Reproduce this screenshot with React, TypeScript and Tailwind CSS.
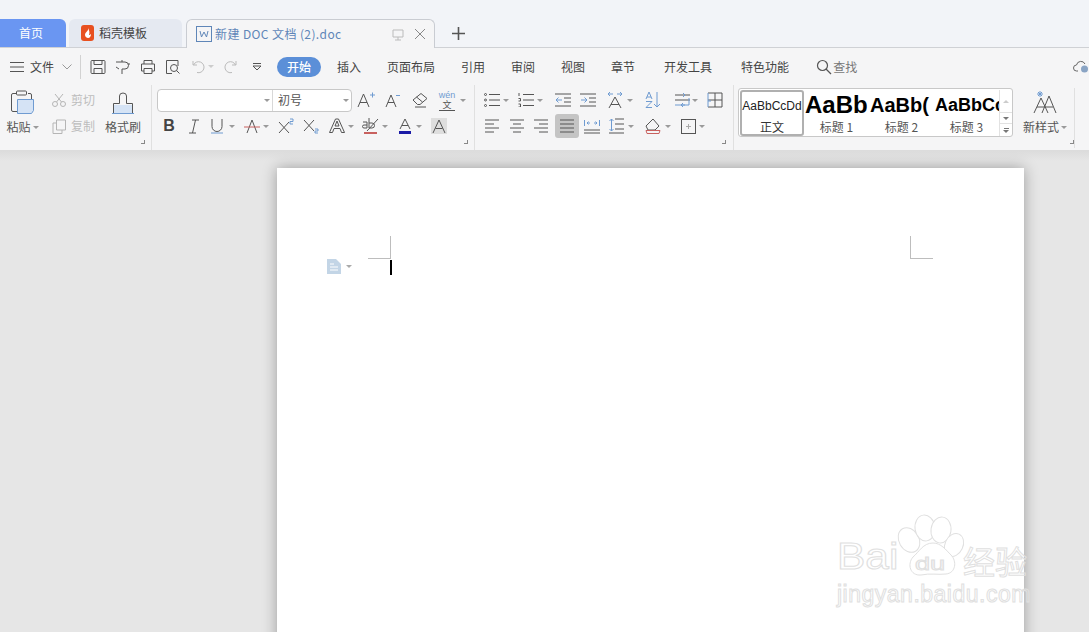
import * as React from "react";

const INK = "#555";
const BLUE = "#6f9bd1";

function Ic({ w = 20, h = 20, children }: { w?: number; h?: number; children: React.ReactNode }) {
  return (
    <svg width={w} height={h} viewBox={`0 0 ${w} ${h}`} fill="none" stroke={INK} strokeWidth="1" className="block shrink-0">
      {children}
    </svg>
  );
}

function Arrow({ className = "" }: { className?: string }) {
  return (
    <div className={"flex h-6 w-2 shrink-0 items-center justify-center " + className}>
      <div className="h-0 w-0 border-x-[3px] border-t-[3px] border-x-transparent border-t-[#9a9a9a]" />
    </div>
  );
}

function Tool({ className = "w-5", children }: { className?: string; children: React.ReactNode }) {
  return <div className={"flex h-6 shrink-0 items-center justify-center " + className}>{children}</div>;
}

function Launcher({ className }: { className: string }) {
  return <div className={"absolute h-1 w-1 border-b border-r border-[#888] " + className} />;
}

function TabBar() {
  return (
    <div className="flex h-[48px] items-end border-b border-[#cfd1d5] bg-[#f2f4f8]">
      <div className="flex h-[28px] w-[66px] items-center justify-center rounded-tr-md bg-[#6a96f2] pr-[4px] text-[12px] text-white">首页</div>
      <div className="ml-[3px] flex h-[28px] w-[113px] items-center rounded-t-md bg-[#e5e9f1] pl-[12px] text-[12px] text-[#444]">
        <svg width="13" height="16" viewBox="0 0 13 16" className="mr-[5px]">
          <rect width="13" height="16" rx="3" fill="#e8501f" />
          <path d="M7 3c1 3-3 4-3 7 0 2 2 3 3 3 2 0 3-2 3-4-1 1-2 1-2 1 1-3 0-5-1-7z" fill="#fff" />
        </svg>
        稻壳模板
      </div>
      <div className="relative top-px ml-[4px] flex h-[29px] w-[249px] items-center rounded-t-md border border-b-0 border-[#c9ccd2] bg-[#f5f5f6] pl-[9px] text-[12px] text-[#5f86b8]">
        <svg width="16" height="16" viewBox="0 0 16 16" fill="none" stroke="#5f86b8" className="mr-[3px]">
          <rect x=".5" y=".5" width="15" height="15" />
          <path d="M4 5l1.500 6L8 6l2.500 5L12 5" />
        </svg>
        <span className="tracking-[0.4px]">新建 DOC 文档 (2).doc</span>
        <svg width="14" height="14" viewBox="0 0 14 14" fill="none" stroke="#bbb" className="absolute left-[204px] top-[8px]">
          <path d="M2 2h10v7H2zM7 9v3M4 12h6" />
        </svg>
        <svg width="12" height="12" viewBox="0 0 12 12" fill="none" stroke="#888" className="absolute left-[227px] top-[8px]">
          <path d="M1 1l10 10M11 1 1 11" />
        </svg>
      </div>
      <div className="mb-[6px] ml-[15px] flex h-4 w-4 items-center justify-center">
        <svg width="13" height="13" viewBox="0 0 13 13" stroke="#555" strokeWidth="1.6">
          <path d="M0 6.500h13M6.500 0v13" />
        </svg>
      </div>
    </div>
  );
}

function MenuRow() {
  const tabs: [string, string][] = [
    ["插入", "ml-[16px]"],
    ["页面布局", "ml-[26px]"],
    ["引用", "ml-[26px]"],
    ["审阅", "ml-[26px]"],
    ["视图", "ml-[26px]"],
    ["章节", "ml-[26px]"],
    ["开发工具", "ml-[29px]"],
    ["特色功能", "ml-[29px]"],
  ];
  return (
    <div className="flex h-[37px] items-center bg-[#f5f5f6] text-[12px] text-[#444]">
      <div className="ml-[10px]">
        <Ic w={14} h={12}><path d="M0 1.500h14M0 6h14M0 10.500h14" /></Ic>
      </div>
      <span className="ml-[6px] w-[24px]">文件</span>
      <svg width="10" height="6" viewBox="0 0 10 6" fill="none" stroke="#999" className="ml-[8px]"><path d="M.5.5 5 5 9.500.5" /></svg>
      <div className="ml-[8px] h-[24px] w-px bg-[#d2d2d2]" />
      <div className="ml-[9px]">
        <Ic w={16} h={16}><path d="M2 1.500h12a1 1 0 0 1 1 1v11a1 1 0 0 1-1 1H2a1 1 0 0 1-1-1v-11a1 1 0 0 1 1-1zM4 1.500v4h8v-4M4 14.500v-5h8v5" /></Ic>
      </div>
      <div className="ml-[9px]">
        <Ic w={16} h={16}><path d="M1 3h9a3 3 0 0 1 0 7H7v5M7 1v2M13 5h2M1 8l3 2" /></Ic>
      </div>
      <div className="ml-[9px]">
        <Ic w={16} h={16}><path d="M4 5V1.500h8V5M4 12H1.500V5h13v7H12M4 9.500h8v5H4z" /></Ic>
      </div>
      <div className="ml-[9px]">
        <Ic w={16} h={16}><path d="M13 7V1.500H1.500v13H7" /><circle cx="9" cy="9" r="3.500" /><path d="m11.500 11.500 3 3" /></Ic>
      </div>
      <div className="ml-[11px]">
        <svg width="14" height="14" viewBox="0 0 14 14" fill="none" stroke="#bbb"><path d="M1 1v4h4M1.500 5A5.500 5.500 0 1 1 5 12.500" /></svg>
      </div>
      <div className="ml-[2px] h-0 w-0 border-x-[3px] border-t-[3px] border-x-transparent border-t-[#ccc]" />
      <div className="ml-[9px]">
        <svg width="14" height="14" viewBox="0 0 14 14" fill="none" stroke="#bbb"><path d="M13 1v4H9M12.500 5A5.500 5.500 0 1 0 9 12.500" /></svg>
      </div>
      <div className="ml-[15px]">
        <svg width="10" height="10" viewBox="0 0 10 10" fill="none" stroke="#555"><path d="M1 1.500h8M1 4l4 4 4-4z" /></svg>
      </div>
      <div className="ml-[15px] flex h-[20px] w-[44px] items-center justify-center rounded-full bg-[#5b8fd8] font-medium text-white">开始</div>
      {tabs.map(([t, c]) => (
        <span key={t} className={"shrink-0 " + c}>{t}</span>
      ))}
      <div className="ml-[27px]">
        <svg width="16" height="16" viewBox="0 0 16 16" fill="none" stroke="#555" strokeWidth="1.200"><circle cx="6.500" cy="6.500" r="5" /><path d="m10 10 5 5" /></svg>
      </div>
      <span className="ml-px text-[#777]">查找</span>
      <div className="ml-auto">
        <svg width="16" height="14" viewBox="0 0 16 14" fill="none" stroke="#666"><path d="M5 11H3.500a3 3 0 0 1 0-6 4.500 4.500 0 0 1 8.500-1" /><circle cx="11.500" cy="9" r="3.500" fill="#8aa4c4" stroke="none" /></svg>
      </div>
    </div>
  );
}

function ClipboardGroup() {
  return (
    <div className="relative flex w-[152px] shrink-0 border-r border-[#e0e0e0] text-[12px] text-[#555]">
      <div className="flex w-[46px] shrink-0 flex-col items-center pt-[5px]">
        <svg width="24" height="24" viewBox="0 0 24 24" fill="none" stroke={INK}>
          <path d="M5 3.500H2a1.500 1.500 0 0 0-1.500 1.500v15A1.500 1.500 0 0 0 2 21.500h4M17 3.500h2A1.500 1.500 0 0 1 20.500 5v4" />
          <rect x="5.500" y="1" width="10" height="4" rx="1" />
          <path d="M6.500 9.500h16v11l-2 3h-14z" fill="#d5e3f5" stroke={BLUE} />
        </svg>
        <div className="mt-[4px] flex items-center pr-[1px]">
          粘贴
          <div className="ml-[2px] h-0 w-0 border-x-[3px] border-t-[3px] border-x-transparent border-t-[#9a9a9a]" />
        </div>
      </div>
      <div className="flex w-[54px] shrink-0 flex-col pl-[6px] pt-[3px] text-[#bdbdbd]">
        <div className="flex h-6 items-center">
          <svg width="14" height="14" viewBox="0 0 14 14" fill="none" stroke="#b5b5b5"><circle cx="3" cy="11" r="2.500" /><circle cx="11" cy="11" r="2.500" /><path d="M4.500 9 11 1M9.500 9 3 1" /></svg>
          <span className="ml-[5px]">剪切</span>
        </div>
        <div className="mt-[2px] flex h-6 items-center">
          <svg width="14" height="15" viewBox="0 0 14 15" fill="none" stroke="#b5b5b5"><path d="M4.500 1h9v10h-9zM4 4H1v10.500h9V11" /></svg>
          <span className="ml-[5px]">复制</span>
        </div>
      </div>
      <div className="flex w-[46px] shrink-0 flex-col items-center pt-[6px]">
        <svg width="22" height="23" viewBox="0 0 22 23" fill="none" stroke={INK}>
          <path d="M1.500 14h19v8h-19z" fill="#d5e3f5" stroke="none" />
          <path d="M1.500 22V12.500h6V5a3.500 3 0 0 1 7 0v7.500h6V22" />
          <path d="M0 22.500h22" stroke={BLUE} />
        </svg>
        <div className="mt-[4px]">格式刷</div>
      </div>
      <Launcher className="left-[141px] top-[55px]" />
    </div>
  );
}

function FontGroup() {
  return (
    <div className="relative flex w-[323px] shrink-0 flex-col gap-[2px] border-r border-[#e0e0e0] pl-[5px] pt-[3px] text-[12px] text-[#555]">
      <div className="flex h-6 items-center">
        <div className="flex h-[23px] w-[195px] shrink-0 rounded-[4px] border border-[#c8c8c8] bg-white">
          <div className="flex w-[115px] items-center justify-end border-r border-[#d8d8d8] pr-[2px]">
            <div className="h-0 w-0 border-x-[3px] border-t-[3px] border-x-transparent border-t-[#9a9a9a]" />
          </div>
          <div className="flex flex-1 items-center justify-between pl-[5px] pr-[2px]">
            初号
            <div className="h-0 w-0 border-x-[3px] border-t-[3px] border-x-transparent border-t-[#9a9a9a]" />
          </div>
        </div>
        <Tool className="ml-[4px] w-5">
          <Ic w={18} h={18}>
            <path d="M1 16 6.500 3 12 16M3 11.500h7" />
            <path d="M13 4h5M15.500 1.500v5" stroke={BLUE} />
          </Ic>
        </Tool>
        <Tool className="ml-[7px] w-5">
          <Ic w={16} h={16}>
            <path d="M1 15 6 3l5 12M3 10.500h6" />
            <path d="M11 3.500h4" stroke={BLUE} />
          </Ic>
        </Tool>
        <Tool className="ml-[7px] w-5">
          <Ic w={17} h={16}><path d="M1 8 9 1.500l6 5-7 6H5.500zM4.500 5l6 5M3 15h11" /></Ic>
        </Tool>
        <Tool className="ml-[7px] w-5">
          <div className="flex flex-col items-center border-b border-[#555] text-[#555]">
            <span className="font-['Liberation_Sans',sans-serif] text-[9px] leading-[10px] text-[#6f9bd1]">wén</span>
            <span className="text-[9px] leading-[10px]">文</span>
          </div>
        </Tool>
        <Arrow className="ml-[2px]" />
      </div>
      <div className="flex h-6 items-center">
        <Tool className="w-6">
          <span className="font-['Liberation_Sans',sans-serif] text-[16px] font-bold text-[#444]">B</span>
        </Tool>
        <Tool className="ml-[1px] w-6">
          <Ic w={12} h={15}><path d="M4 1h7M1 14h7M7.500 1l-3 13" /></Ic>
        </Tool>
        <Tool className="w-[22px]">
          <Ic w={14} h={16}>
            <path d="M2 1v7.500a5 5 0 0 0 10 0V1" />
            <path d="M1 15h12" stroke={BLUE} />
          </Ic>
        </Tool>
        <Arrow />
        <Tool className="ml-[6px] w-5">
          <Ic w={16} h={16}>
            <path d="M3 15 8 2l5 13" />
            <path d="M0 9h16" stroke="#c8615f" />
          </Ic>
        </Tool>
        <Arrow />
        <Tool className="ml-[4px] w-6">
          <Ic w={16} h={16}>
            <path d="M1 4l10 11M11 4 1 15" />
            <path d="M12 1h3v2.500h-3V6h3" stroke={BLUE} />
          </Ic>
        </Tool>
        <Tool className="ml-[1px] w-6">
          <Ic w={17} h={16}>
            <path d="M1 2l10 11M11 2 1 13" />
            <path d="M12 11h3v2h-3v2h3" stroke={BLUE} />
          </Ic>
        </Tool>
        <Tool className="ml-[4px] w-5">
          <Ic><path d="M2.500 16.500 8.500 3h3l6 13.500h-3l-1.500-4H7l-1.500 4zM8 10h4l-2-5z" /></Ic>
        </Tool>
        <Arrow />
        <Tool className="ml-[6px] w-5">
          <svg width="18" height="18" viewBox="0 0 18 18" fill="none" stroke={INK}>
            <path d="M1 5h4v6H2a1.500 1.500 0 0 1 0-3h3M7 1v10h3a2.500 2.500 0 0 0 0-5H7M16 2 5 14" />
            <path d="M2 16h13" stroke="#c8615f" strokeWidth="2" />
          </svg>
        </Tool>
        <Arrow />
        <Tool className="ml-[6px] w-5">
          <svg width="14" height="16" viewBox="0 0 14 16" fill="none" stroke={INK}>
            <path d="M2 11 7 1l5 10M4 7.500h6" />
            <path d="M1 14.500h12" stroke="#1a1aa6" strokeWidth="3" />
          </svg>
        </Tool>
        <Arrow />
        <Tool className="ml-[6px] w-5">
          <div className="flex h-[16px] w-[16px] items-center justify-center bg-[#dedede]">
            <svg width="14" height="14" viewBox="0 0 14 14" fill="none" stroke={INK}><path d="M1 14 7 1l6 13M3.500 9.500h7" /></svg>
          </div>
        </Tool>
      </div>
      <Launcher className="left-[312px] top-[55px]" />
    </div>
  );
}

function ParagraphGroup() {
  return (
    <div className="relative flex w-[259px] shrink-0 flex-col gap-[2px] border-r border-[#e0e0e0] pl-[5px] pt-[3px]">
      <div className="flex h-6 items-center">
        <Tool className="ml-[2px] w-5">
          <Ic w={16} h={14}>
            <circle cx="1.500" cy="1.500" r="1" /><circle cx="1.500" cy="7" r="1" /><circle cx="1.500" cy="12.500" r="1" />
            <path d="M5 1.500h11M5 7h11M5 12.500h11" />
          </Ic>
        </Tool>
        <Arrow />
        <Tool className="ml-[6px] w-5">
          <Ic w={16} h={14}>
            <path d="M1 0v3M.5 5.500h2V8H.5M.5 11h2v3h-2" />
            <path d="M5 1.500h11M5 7h11M5 12.500h11" />
          </Ic>
        </Tool>
        <Arrow />
        <Tool className="ml-[9px] w-5">
          <Ic w={16} h={14}>
            <path d="M0 1h16M9 5h7M9 9h7M0 13h16" />
            <path d="M7 7H1M3.500 4.500 1 7l2.500 2.500" stroke={BLUE} />
          </Ic>
        </Tool>
        <Tool className="ml-[5px] w-5">
          <Ic w={16} h={14}>
            <path d="M0 1h16M9 5h7M9 9h7M0 13h16" />
            <path d="M1 7h6M4.500 4.500 7 7 4.500 9.500" stroke={BLUE} />
          </Ic>
        </Tool>
        <Tool className="ml-[7px] w-5">
          <Ic w={16} h={18}>
            <path d="M2 17 8 6l6 11M4 13.500h8" />
            <path d="M1 3h5M1 3l2-2M1 3l2 2M10 3h5M15 3l-2-2M15 3l-2 2" stroke={BLUE} />
          </Ic>
        </Tool>
        <Arrow className="ml-[1px]" />
        <Tool className="ml-[9px] w-5">
          <Ic w={16} h={18}>
            <path d="M1 8 4 1l3 7M2 6h4" stroke={BLUE} />
            <path d="M1 10.500h6l-6 6h6M12 1v15M9 13l3 3 3-3" stroke={BLUE} />
          </Ic>
        </Tool>
        <Tool className="ml-[10px] w-[18px]">
          <Ic w={15} h={16}>
            <path d="M0 3h15M0 8h15" />
            <path d="M0 13h10M14 6v7H6M8 11l-2 2 2 2M8 1l2 2-2 2" stroke={BLUE} />
          </Ic>
        </Tool>
        <Arrow />
        <Tool className="ml-[6px] w-5">
          <Ic w={16} h={16}>
            <path d="M1 1h14v14H1M8 1v14M1 8h14" />
            <path d="M1 1v14M1 9h3" stroke={BLUE} />
          </Ic>
        </Tool>
      </div>
      <div className="flex h-6 items-center">
        <Tool className="ml-[2px] w-5"><Ic w={14} h={14}><path d="M0 1h14M0 5h9M0 9h14M0 13h9" /></Ic></Tool>
        <Tool className="ml-[5px] w-5"><Ic w={14} h={14}><path d="M0 1h14M3 5h8M0 9h14M3 13h8" /></Ic></Tool>
        <Tool className="ml-[4px] w-5"><Ic w={14} h={14}><path d="M0 1h14M5 5h9M0 9h14M5 13h9" /></Ic></Tool>
        <Tool className="ml-[4px] w-6 rounded-[3px] bg-[#c4c4c4]"><Ic w={14} h={14}><path d="M0 1h14M0 5h14M0 9h14M0 13h14" /></Ic></Tool>
        <Tool className="ml-[3px] w-5">
          <Ic w={16} h={15}>
            <path d="M0 11h16M0 14h16" />
            <path d="M.5 1v6M15.500 1v6M3 4h3M3 4l1.500-1.500M3 4l1.500 1.500M13 4h-3M13 4l-1.500-1.500M13 4l-1.500 1.500" stroke={BLUE} />
          </Ic>
        </Tool>
        <Tool className="ml-[4px] w-5">
          <Ic w={15} h={16}>
            <path d="M6 1h9M6 6h9M6 11h9M0 15h15" />
            <path d="M2.500 1v12M.5 3l2-2 2 2M.5 11l2 2 2-2" stroke={BLUE} />
          </Ic>
        </Tool>
        <Arrow className="ml-[1px]" />
        <Tool className="ml-[8px] w-5">
          <svg width="16" height="16" viewBox="0 0 16 16" fill="none" stroke={INK}>
            <path d="M1 8 8 1l6 7-4 4H3z" />
            <path d="M1 12.500h14l-1 3H2z" stroke="#c8615f" />
          </svg>
        </Tool>
        <Arrow className="ml-[1px]" />
        <Tool className="ml-[6px] w-5">
          <Ic w={15} h={15}>
            <rect x=".5" y=".5" width="14" height="14" />
            <path d="M7.500 5v5M5 7.500h5" stroke="#aaa" />
          </Ic>
        </Tool>
        <Arrow />
      </div>
      <Launcher className="left-[247px] top-[55px]" />
    </div>
  );
}

function StyleCell({ label, preview, className }: { label: string; preview: string; className: string }) {
  return (
    <div className="flex w-[65px] shrink-0 flex-col items-center overflow-hidden">
      <div className={"flex h-[30px] w-full items-center overflow-hidden whitespace-nowrap pl-[1px] font-['Liberation_Sans',sans-serif] text-black " + className}>{preview}</div>
      <div className="text-[12px] leading-[14px] text-[#555]">{label}</div>
    </div>
  );
}

function StylesGroup() {
  return (
    <div className="relative flex flex-1 pl-[4px] pt-[3px]">
      <div className="flex h-[49px] w-[275px] shrink-0 rounded-[3px] border border-[#c8c8c8] bg-white pl-px pt-px">
        <div className="flex h-[46px] w-[64px] shrink-0 flex-col items-center rounded-[3px] border-2 border-[#b0b0b0]">
          <div className="flex h-[28px] items-center whitespace-nowrap font-['Liberation_Sans',sans-serif] text-[12px] text-[#222]">AaBbCcDd</div>
          <div className="text-[12px] leading-[14px] text-[#333]">正文</div>
        </div>
        <StyleCell label="标题 1" preview="AaBb" className="text-[24px] font-bold" />
        <StyleCell label="标题 2" preview="AaBb(" className="text-[20px] font-bold" />
        <StyleCell label="标题 3" preview="AaBbCc" className="text-[18px] font-bold" />
        <div className="flex w-[13px] shrink-0 flex-col border-l border-[#e2e2e2] text-[#aaa]">
          <div className="flex h-[22px] items-center justify-center">
            <div className="h-0 w-0 border-x-[3px] border-b-[3px] border-x-transparent border-b-[#ccc]" />
          </div>
          <div className="flex h-[12px] items-center justify-center border-y border-[#e2e2e2]">
            <div className="h-0 w-0 border-x-[3px] border-t-[3px] border-x-transparent border-t-[#777]" />
          </div>
          <div className="flex flex-1 flex-col items-center justify-center gap-px">
            <div className="h-px w-[5px] bg-[#777]" />
            <div className="h-0 w-0 border-x-[3px] border-t-[3px] border-x-transparent border-t-[#777]" />
          </div>
        </div>
      </div>
      <div className="ml-[9px] flex w-[46px] shrink-0 flex-col items-center text-[12px] text-[#555]">
        <svg width="26" height="26" viewBox="0 0 26 26" fill="none" stroke={INK} className="mt-[1px]">
          <path d="M2 24 9 9l7 15M5 18h8M10 24 17 7l7 17M13 18h8" />
          <path d="M8 2v6M5 5h6M6 3l4 4M10 3 6 7" stroke={BLUE} />
        </svg>
        <div className="mt-[3px] flex items-center">
          新样式
          <div className="ml-[2px] h-0 w-0 border-x-[3px] border-t-[3px] border-x-transparent border-t-[#9a9a9a]" />
        </div>
      </div>
      <Launcher className="left-[336px] top-[55px]" />
      <div className="ml-[6px] h-[60px] w-px bg-[#e0e0e0]" />
    </div>
  );
}

function Ribbon() {
  return (
    <div className="flex h-[65px] bg-[#f5f5f6]">
      <ClipboardGroup />
      <FontGroup />
      <ParagraphGroup />
      <StylesGroup />
    </div>
  );
}

function Watermark() {
  const stroke = "text-transparent [-webkit-text-stroke:1px_#e0e0e0]";
  return (
    <div className="pointer-events-none absolute left-[836px] top-[514px] h-[96px] w-[200px]">
      <svg width="200" height="70" viewBox="0 0 200 70" fill="#fff" stroke="#e0e0e0" className="absolute left-0 top-0">
        <ellipse cx="73" cy="26" rx="10" ry="13" transform="rotate(-30 73 26)" />
        <ellipse cx="89" cy="14" rx="10" ry="13" transform="rotate(-8 89 14)" />
        <ellipse cx="105" cy="16" rx="10" ry="13" transform="rotate(8 105 16)" />
        <ellipse cx="118" cy="31" rx="9" ry="12" transform="rotate(25 118 31)" />
        <path d="M97 29c8 0 13 7 18 12 6 6 5 18-5 19-8 1-16-1-25 1-11 1-14-11-8-18 6-5 10-14 20-14z" />
      </svg>
      <span className={"absolute left-[1px] top-[23px] origin-left scale-x-[1.18] font-['Liberation_Sans',sans-serif] text-[36px] leading-[40px] " + stroke}>Bai</span>
      <span className={"absolute left-[79px] top-[38px] origin-left scale-x-[1.5] font-['Liberation_Sans',sans-serif] text-[18px] leading-[24px] " + stroke}>du</span>
      <span className={"absolute left-[127px] top-[26px] text-[32px] leading-[40px] " + stroke}>经验</span>
      <span className={"absolute left-[1px] top-[66px] whitespace-nowrap font-['Liberation_Sans',sans-serif] text-[23px] leading-[28px] tracking-[.5px] " + stroke}>jingyan.baidu.com</span>
    </div>
  );
}

function Page() {
  return (
    <div className="flex-1 overflow-hidden bg-[#e6e6e6] pl-[277px] pt-[17px] [background-image:linear-gradient(#dcdcdc,#e6e6e6_10px)]">
      <div className="relative h-[600px] w-[747px] bg-white shadow-[0_0_14px_rgba(0,0,0,0.32)]">
        <div className="absolute left-[91px] top-[68px] h-[23px] w-[23px] border-b border-r border-[#bdbdbd]" />
        <div className="absolute left-[633px] top-[68px] h-[23px] w-[23px] border-b border-l border-[#bdbdbd]" />
        <div className="absolute left-[113px] top-[92px] h-[15px] w-[2px] bg-black" />
        <div className="absolute left-[50px] top-[91px] flex items-center">
          <svg width="14" height="15" viewBox="0 0 14 15">
            <path d="M0 0h9l5 5v10H0z" fill="#c3d5e6" />
            <path d="M3 5h4M3 8h8M3 11h8" stroke="#fff" />
          </svg>
          <div className="ml-[5px] h-0 w-0 border-x-[3px] border-t-[3px] border-x-transparent border-t-[#aaa]" />
        </div>
      </div>
    </div>
  );
}

export default function App() {
  return (
    <div className="relative flex h-[632px] w-[1089px] flex-col overflow-hidden bg-[#e6e6e6] font-['Noto_Sans_CJK_SC','Noto_Sans',sans-serif]">
      <TabBar />
      <MenuRow />
      <Ribbon />
      <div className="h-px bg-[#dcdcdc]" />
      <Page />
      <Watermark />
    </div>
  );
}
